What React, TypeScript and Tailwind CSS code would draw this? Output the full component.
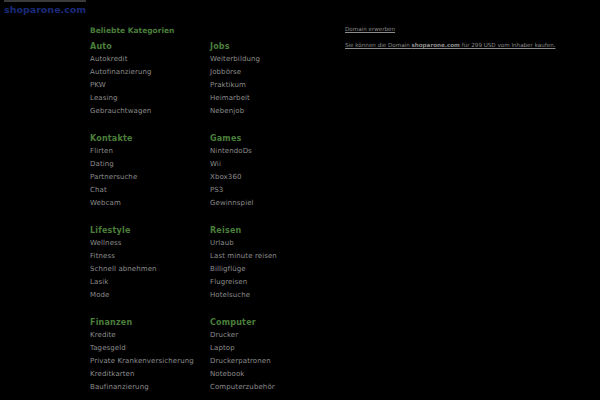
import React from "react";

const cats: { title: string; items: string[] }[][] = [
  [
    { title: "Auto", items: ["Autokredit", "Autofinanzierung", "PKW", "Leasing", "Gebrauchtwagen"] },
    { title: "Jobs", items: ["Weiterbildung", "Jobbörse", "Praktikum", "Heimarbeit", "Nebenjob"] },
  ],
  [
    { title: "Kontakte", items: ["Flirten", "Dating", "Partnersuche", "Chat", "Webcam"] },
    { title: "Games", items: ["NintendoDs", "Wii", "Xbox360", "PS3", "Gewinnspiel"] },
  ],
  [
    { title: "Lifestyle", items: ["Wellness", "Fitness", "Schnell abnehmen", "Lasik", "Mode"] },
    { title: "Reisen", items: ["Urlaub", "Last minute reisen", "Billigflüge", "Flugreisen", "Hotelsuche"] },
  ],
  [
    { title: "Finanzen", items: ["Kredite", "Tagesgeld", "Private Krankenversicherung", "Kreditkarten", "Baufinanzierung"] },
    { title: "Computer", items: ["Drucker", "Laptop", "Druckerpatronen", "Notebook", "Computerzubehör"] },
  ],
];

export default function App() {
  return (
    <div className="w-[600px] h-[400px] overflow-hidden bg-black" style={{ fontFamily: '"DejaVu Sans", Verdana, sans-serif' }}>
      <div className="pl-[4px]">
        <div className="w-[82px] h-[2px] bg-[#3a3a3a]" />
        <div className="text-[9.5px] font-bold text-[#1b2a7a] leading-[13px] mt-[1px]">shoparone.com</div>
      </div>
      <div className="flex">
        <div className="w-[250px] ml-[90px] mt-[10px]">
          <div className="text-[7.5px] font-bold text-[#4a7e3a] leading-[10px]">Beliebte Kategorien</div>
          <div className="mt-[4px]">
            {cats.map((row, i) => (
              <div key={i} className="flex h-[92px]">
                {row.map((c) => (
                  <div key={c.title} className="w-[120px]">
                    <div className="text-[8px] font-bold text-[#4a7e3a] leading-[13px] tracking-[0.2px]">{c.title}</div>
                    {c.items.map((it) => (
                      <div key={it} className="text-[7px] text-[#8c8c8c] leading-[13px] tracking-[0.1px]">{it}</div>
                    ))}
                  </div>
                ))}
              </div>
            ))}
          </div>
        </div>
        <div className="ml-[5px] mt-[9px] text-[5.6px] text-[#8c8c8c] leading-[8px]">
          <div className="underline">Domain erwerben</div>
          <div className="underline mt-[8px]">
            Sie können die Domain <span className="font-bold">shoparone.com</span> für 299 USD vom Inhaber kaufen.
          </div>
        </div>
      </div>
    </div>
  );
}
